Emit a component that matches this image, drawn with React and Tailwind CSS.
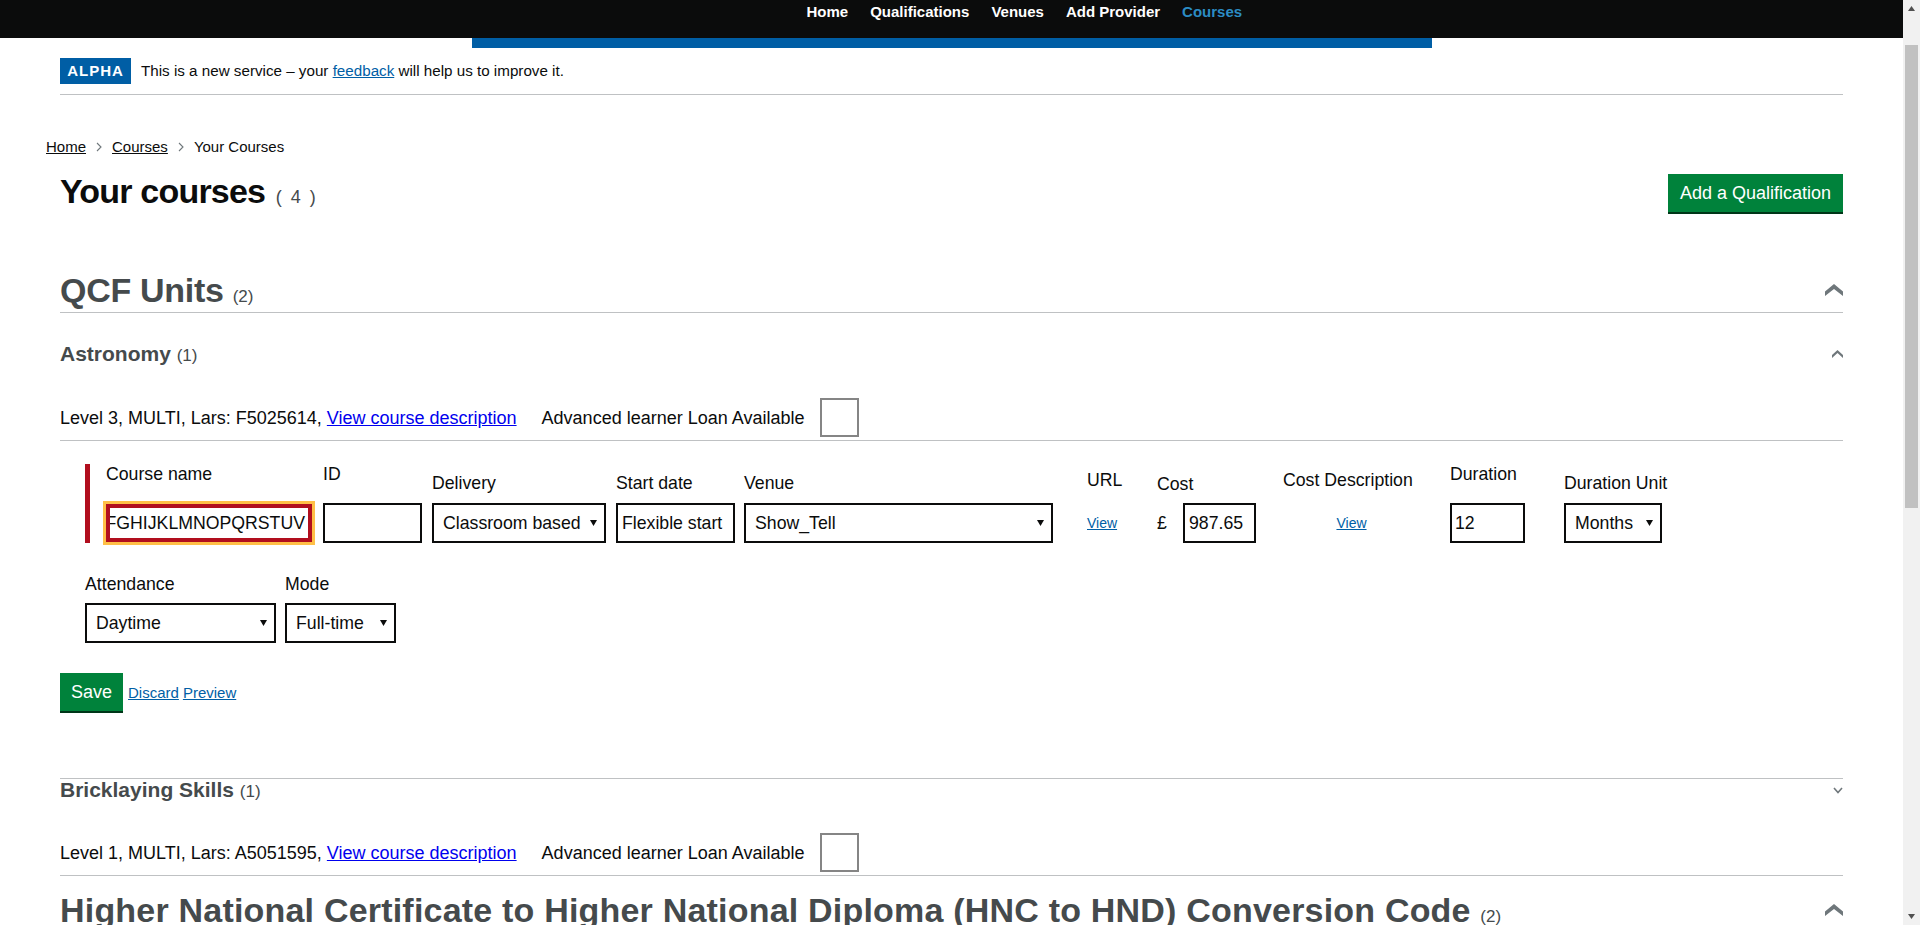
import React from "react";

function Caret() {
  return (
    <svg width="7" height="6" viewBox="0 0 7 6" className="shrink-0">
      <polygon points="0,0 7,0 3.5,6" fill="#0b0c0c" />
    </svg>
  );
}

function FakeSelect({ value, className = "" }) {
  return (
    <div className={`flex h-[40px] items-center justify-between border-2 border-[#0b0c0c] bg-white pl-[9px] pr-[7px] whitespace-nowrap ${className}`}>
      <span>{value}</span>
      <Caret />
    </div>
  );
}

function FakeInput({ value = "", className = "" }) {
  return (
    <div className={`flex h-[40px] items-center overflow-hidden border-2 border-[#0b0c0c] bg-white pl-[3px] whitespace-nowrap ${className}`}>
      {value}
    </div>
  );
}

function ChevronBig() {
  return (
    <svg width="18" height="12" viewBox="0 0 18 12" className="shrink-0">
      <polygon points="0,7.5 9,0 18,7.5 18,12 9,5 0,12" fill="#6f777b" />
    </svg>
  );
}

function ChevronSmallUp() {
  return (
    <svg width="11" height="8" viewBox="0 0 11 8" className="shrink-0">
      <polygon points="0,5 5.5,0 11,5 11,8 5.5,3 0,8" fill="#6f777b" />
    </svg>
  );
}

function ChevronSmallDown() {
  return (
    <svg width="10" height="7" viewBox="0 0 10 7" className="shrink-0">
      <polyline points="1,1 5,5.5 9,1" fill="none" stroke="#6f777b" strokeWidth="1.6" />
    </svg>
  );
}

function Crumb() {
  return (
    <svg width="6" height="10" viewBox="0 0 6 10">
      <polyline points="1,1 5,5 1,9" fill="none" stroke="#6f777b" strokeWidth="1.1" />
    </svg>
  );
}

function LevelRow({ text }) {
  return (
    <div className="mt-[32px] flex items-center border-b border-[#bfc1c3] pb-[3px] text-[18px]">
      <span>
        {text}{" "}
        <a href="#" className="text-[#0000ee] underline">View course description</a>
      </span>
      <span className="ml-[25px]">Advanced learner Loan Available</span>
      <span className="ml-[16px] h-[39px] w-[39px] border-2 border-[#858585]" />
    </div>
  );
}

function Scrollbar() {
  return (
    <aside className="sticky top-0 flex h-[925px] w-[17px] shrink-0 flex-col items-center self-start bg-[#f1f1f1]">
      <div className="flex h-[17px] w-full items-center justify-center">
        <svg width="7" height="5" viewBox="0 0 7 5">
          <polygon points="0,5 7,5 3.5,0" fill="#505050" />
        </svg>
      </div>
      <div className="mt-[28px] h-[463px] w-[13px] bg-[#c1c1c1]" />
      <div className="flex-1" />
      <div className="flex h-[17px] w-full items-center justify-center">
        <svg width="7" height="5" viewBox="0 0 7 5">
          <polygon points="0,0 7,0 3.5,5" fill="#505050" />
        </svg>
      </div>
    </aside>
  );
}

export default function App() {
  return (
    <div className="flex min-h-[1400px] bg-white font-['Liberation_Sans',Arial,sans-serif] text-[17.7px] leading-[20px] text-[#0b0c0c]">
      <div className="w-[1903px] shrink-0">
        <header className="h-[38px] bg-[#0b0c0c]">
          <div className="mx-auto h-full w-[960px]">
            <nav className="ml-[335px] flex gap-[22px] pt-[2px] text-[15px] font-bold leading-[20px] text-white">
              <a href="#">Home</a>
              <a href="#">Qualifications</a>
              <a href="#">Venues</a>
              <a href="#">Add Provider</a>
              <a href="#" className="text-[#2b8cc4]">Courses</a>
            </nav>
          </div>
        </header>
        <div className="mx-auto h-[10px] w-[960px] bg-[#005ea5]" />

        <main className="mx-[60px]">
          <div className="flex items-center border-b border-[#bfc1c3] pt-[10px] pb-[10px]">
            <span className="flex h-[26px] w-[71px] items-center justify-center bg-[#005ea5] text-[15px] font-bold tracking-[1px] text-white">
              ALPHA
            </span>
            <p className="ml-[10px] text-[15.2px]">
              This is a new service – your{" "}
              <a href="#" className="text-[#005ea5] underline">feedback</a> will help us to improve it.
            </p>
          </div>

          <nav className="-ml-[14px] mt-[42px] flex items-center gap-[10px] text-[15px] leading-[20px]">
            <a href="#" className="underline">Home</a>
            <Crumb />
            <a href="#" className="underline">Courses</a>
            <Crumb />
            <span>Your Courses</span>
          </nav>

          <div className="mt-[14px] flex items-start justify-between">
            <h1 className="text-[34px] font-bold leading-[40px] tracking-[-0.8px]">
              Your courses{" "}
              <span className="ml-[2px] text-[18px] font-normal leading-none tracking-[2px] text-[#454a4c]">( 4 )</span>
            </h1>
            <button className="mt-[3px] h-[40px] border-b-2 border-[#003618] bg-[#00823b] px-[12px] text-[18px] text-white">
              Add a Qualification
            </button>
          </div>

          <div className="mt-[56px] flex items-center justify-between border-b border-[#bfc1c3] pb-[2px]">
            <h2 className="text-[34px] font-bold leading-[40px] tracking-[-0.3px] text-[#454a4c]">
              QCF Units <span className="text-[17px] font-normal leading-none tracking-normal">(2)</span>
            </h2>
            <ChevronBig />
          </div>

          <div className="mt-[29px] flex items-center justify-between">
            <h3 className="text-[21px] font-bold leading-[24px] text-[#454a4c]">
              Astronomy <span className="text-[17px] font-normal leading-none">(1)</span>
            </h3>
            <ChevronSmallUp />
          </div>

          <LevelRow text="Level 3, MULTI, Lars: F5025614," />

          <div className="mt-[23px] ml-[25px]">
            <div className="flex items-end">
              <div className="flex flex-col border-l-[5px] border-[#b10e1e] pl-[16px] pb-[1px]">
                <label className="mb-[20px]">Course name</label>
                <div className="flex h-[38px] w-[206px] items-center justify-end overflow-hidden whitespace-nowrap border-4 border-[#b10e1e] bg-white pr-[3px] outline-[3px] outline-solid outline-[#ffbf47]">
                  ABCDEFGHIJKLMNOPQRSTUV
                </div>
              </div>
              <div className="ml-[11px] flex flex-col">
                <label className="mb-[19px]">ID</label>
                <FakeInput className="w-[99px]" />
              </div>
              <div className="ml-[10px] flex flex-col">
                <label className="mb-[10px]">Delivery</label>
                <FakeSelect value="Classroom based" className="w-[174px]" />
              </div>
              <div className="ml-[10px] flex flex-col">
                <label className="mb-[10px]">Start date</label>
                <FakeInput value="Flexible start" className="w-[119px] pl-[4px]" />
              </div>
              <div className="ml-[9px] flex flex-col">
                <label className="mb-[10px]">Venue</label>
                <FakeSelect value="Show_Tell" className="w-[309px]" />
              </div>
              <div className="ml-[34px] flex w-[36px] flex-col">
                <label className="mb-[13px]">URL</label>
                <div className="flex h-[40px] items-center">
                  <a href="#" className="text-[14px] text-[#005ea5] underline">View</a>
                </div>
              </div>
              <div className="ml-[34px] flex flex-col">
                <label className="mb-[9px]">Cost</label>
                <div className="flex items-center">
                  <span className="w-[26px]">£</span>
                  <FakeInput value="987.65" className="w-[73px] pl-[4px]" />
                </div>
              </div>
              <div className="ml-[27px] flex w-[137px] flex-col">
                <label className="mb-[13px] whitespace-nowrap">Cost Description</label>
                <div className="flex h-[40px] items-center justify-center">
                  <a href="#" className="text-[14px] text-[#005ea5] underline">View</a>
                </div>
              </div>
              <div className="ml-[30px] flex flex-col">
                <label className="mb-[19px]">Duration</label>
                <FakeInput value="12" className="w-[75px]" />
              </div>
              <div className="ml-[39px] flex flex-col">
                <label className="mb-[10px] whitespace-nowrap">Duration Unit</label>
                <FakeSelect value="Months" className="w-[98px]" />
              </div>
            </div>

            <div className="mt-[31px] flex items-end">
              <div className="flex flex-col">
                <label className="mb-[9px]">Attendance</label>
                <FakeSelect value="Daytime" className="w-[191px]" />
              </div>
              <div className="ml-[9px] flex flex-col">
                <label className="mb-[9px]">Mode</label>
                <FakeSelect value="Full-time" className="w-[111px]" />
              </div>
            </div>
          </div>

          <div className="mt-[30px] flex items-center">
            <button className="h-[40px] border-b-2 border-[#003618] bg-[#00823b] px-[11px] text-[18px] text-white">
              Save
            </button>
            <a href="#" className="ml-[5px] text-[15px] text-[#005ea5] underline">Discard</a>
            <a href="#" className="ml-[4px] text-[15px] text-[#005ea5] underline">Preview</a>
          </div>

          <div className="mt-[65px] flex items-center justify-between border-t border-[#bfc1c3]">
            <h3 className="text-[21px] font-bold leading-[22px] text-[#454a4c]">
              Bricklaying Skills <span className="text-[17px] font-normal leading-none">(1)</span>
            </h3>
            <ChevronSmallDown />
          </div>

          <LevelRow text="Level 1, MULTI, Lars: A5051595," />

          <div className="mt-[14px] flex items-center justify-between border-b border-[#bfc1c3] pb-[2px]">
            <h2 className="text-[34px] font-bold leading-[40px] tracking-[0.2px] text-[#454a4c]">
              Higher National Certificate to Higher National Diploma (HNC to HND) Conversion Code{" "}
              <span className="text-[17px] font-normal leading-none tracking-normal">(2)</span>
            </h2>
            <ChevronBig />
          </div>

          <div className="mt-[29px] flex items-center justify-between">
            <h3 className="text-[21px] font-bold leading-[24px] text-[#454a4c]">
              Conversion <span className="text-[17px] font-normal leading-none">(2)</span>
            </h3>
            <ChevronSmallDown />
          </div>
        </main>
      </div>
      <Scrollbar />
    </div>
  );
}
